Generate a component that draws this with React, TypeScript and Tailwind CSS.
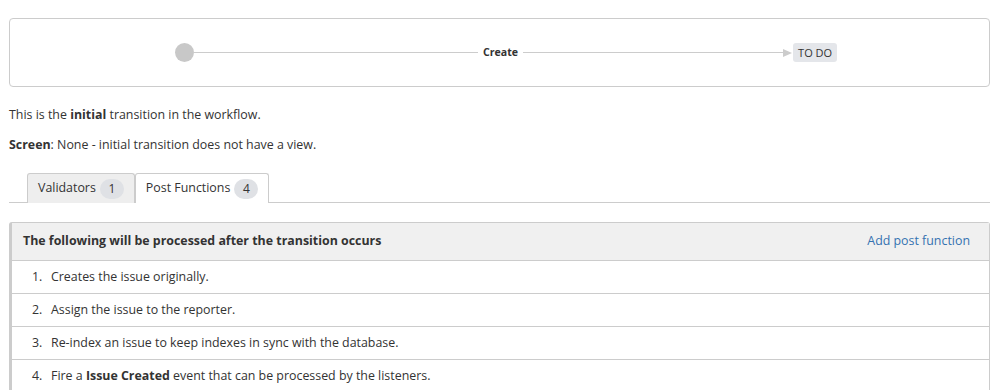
export default function App() {
  const steps = [
    <>Creates the issue originally.</>,
    <>Assign the issue to the reporter.</>,
    <>Re-index an issue to keep indexes in sync with the database.</>,
    <>
      Fire a <b className="font-bold">Issue Created</b> event that can be processed by the listeners.
    </>,
  ]

  return (
    <div
      className="w-[999px] h-[390px] bg-white text-[#333] text-[12.4px] overflow-hidden"
      style={{ fontFamily: '"Open Sans", "Noto Sans", sans-serif' }}
    >
      <div className="px-[9px] pt-[18px]">
        {/* Workflow diagram */}
        <div className="h-[69px] border border-[#ccc] rounded-[4px] flex items-center">
          <div className="flex items-center w-full pl-[165px]">
            <div className="w-[19px] h-[19px] rounded-full bg-[#c8c8c8] shrink-0" />
            <div className="w-[284px] h-px bg-[#ccc]" />
            <span className="px-[5px] text-[10.6px] font-bold text-[#333] leading-none">Create</span>
            <div className="w-[260px] h-px bg-[#ccc]" />
            <svg width="10" height="10" viewBox="0 0 10 10" className="shrink-0">
              <polygon points="0,1 9,5 0,9" fill="#ccc" />
            </svg>
            <span className="bg-[#e4e6ea] rounded-[3px] px-[5px] h-[19px] flex items-center text-[11px] text-[#333] leading-none">
              TO DO
            </span>
          </div>
        </div>

        <p className="mt-[19px] leading-[18px]">
          This is the <b className="font-bold">initial</b> transition in the workflow.
        </p>
        <p className="mt-[12px] leading-[18px]">
          <b className="font-bold">Screen</b>: None - initial transition does not have a view.
        </p>

        {/* Tabs */}
        <div className="mt-[19px] flex border-b border-[#ccc] pl-[18px] h-[30px]">
          <div className="flex items-center gap-[4px] pl-[10px] pr-[10px] bg-[#eee] border border-b-0 border-[#ccc] rounded-t-[3px] -mb-px">
            <span>Validators</span>
            <span className="w-[24px] h-[20px] rounded-full bg-[#dfe1e5] flex items-center justify-center text-[12px]">1</span>
          </div>
          <div className="flex items-center gap-[4px] pl-[10px] pr-[10px] bg-white border border-b-0 border-[#ccc] rounded-t-[3px] -mb-px h-[30px]">
            <span>Post Functions</span>
            <span className="w-[24px] h-[20px] rounded-full bg-[#dfe1e5] flex items-center justify-center text-[12px]">4</span>
          </div>
        </div>

        {/* Post functions table */}
        <div className="mt-[19px] border border-[#ccc] border-l-[3px] rounded-[3px]">
          <div className="h-[38px] bg-[#f0f0f0] flex items-center justify-between pl-[11px] pr-[19px] border-b border-[#ccc]">
            <span className="font-bold">The following will be processed after the transition occurs</span>
            <a className="text-[#3572b0]">Add post function</a>
          </div>
          <ol>
            {steps.map((s, i) => (
              <li
                key={i}
                className={`h-[33px] flex items-center pl-[20px] ${i < steps.length - 1 ? 'border-b border-[#ccc]' : ''}`}
              >
                <span className="w-[19px]">{i + 1}.</span>
                <span>{s}</span>
              </li>
            ))}
          </ol>
        </div>
      </div>
    </div>
  )
}
